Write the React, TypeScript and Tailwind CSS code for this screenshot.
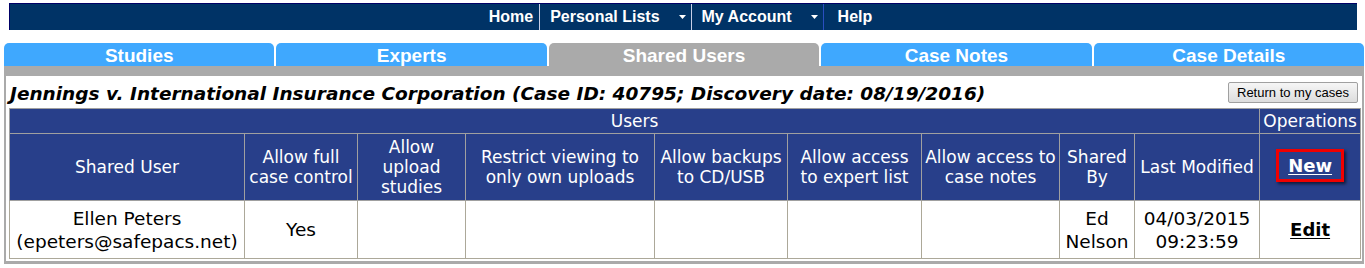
import React from 'react';

const tabs = ['Studies', 'Experts', 'Shared Users', 'Case Notes', 'Case Details'];

const headers = [
  ['Shared User'],
  ['Allow full', 'case control'],
  ['Allow', 'upload', 'studies'],
  ['Restrict viewing to', 'only own uploads'],
  ['Allow backups', 'to CD/USB'],
  ['Allow access', 'to expert list'],
  ['Allow access to', 'case notes'],
  ['Shared', 'By'],
  ['Last Modified'],
];

const widths = [235, 113, 108, 189, 133, 134, 138, 75, 125, 101];

function Caret() {
  return (
    <svg width="7" height="4" viewBox="0 0 7 4" className="ml-[19px] mr-[5px]">
      <path d="M0 0h7L3.5 4z" fill="#fff" />
    </svg>
  );
}

function NavBar() {
  return (
    <div className="ml-[9px] flex h-[27px] w-[1348px] items-stretch justify-center border-l border-t border-[#000066] bg-[#003366] font-['Liberation_Sans',Arial,sans-serif] text-[16px] font-bold text-white">
      <div className="flex items-center pl-[6px] pr-[6px]">Home</div>
      <div className="w-px bg-[#c8d0e8]" />
      <div className="flex items-center pl-[10px]">
        Personal Lists
        <Caret />
      </div>
      <div className="w-px bg-[#c8d0e8]" />
      <div className="flex items-center pl-[10px]">
        My Account
        <Caret />
      </div>
      <div className="w-px bg-[#2a4fc0]" />
      <div className="flex items-center pl-[14px] pr-[12px]">Help</div>
    </div>
  );
}

export default function App() {
  return (
    <div className="h-[268px] w-[1365px] overflow-hidden bg-white pt-[3px]">
      <NavBar />

      <div className="ml-[4px] mt-[13px] flex w-[1360px] gap-[2px]">
        {tabs.map((t) => (
          <div
            key={t}
            className={`flex h-[23px] flex-1 items-center justify-center rounded-t-[5px] pt-[3px] font-['Liberation_Sans',Arial,sans-serif] text-[19px] font-bold text-white ${
              t === 'Shared Users' ? 'bg-[#aaaaaa]' : 'bg-[#3fa8fe]'
            }`}
          >
            {t}
          </div>
        ))}
      </div>
      <div className="ml-[4px] h-[10px] w-[1360px] bg-[#aaaaaa]" />

      <div className="ml-[4px] w-[1360px] border-x-2 border-b-[3px] border-[#aaaaaa] pb-[2px] pl-[3px] pr-[1px]">
        <div className="flex h-[32px] items-center justify-between pt-[4px]">
          <h1 className="pl-[1px] font-['DejaVu_Sans',Verdana,sans-serif] text-[18.5px] font-bold italic leading-[22px] text-black">
            Jennings v. International Insurance Corporation (Case ID: 40795; Discovery date: 08/19/2016)
          </h1>
          <button
            type="button"
            className="mr-[3px] h-[21px] w-[130px] -translate-y-[2px] rounded-[2px] border border-[#a0a0a0] bg-gradient-to-b from-[#f6f6f6] to-[#dddddd] font-['Liberation_Sans',Arial,sans-serif] text-[13px] text-black"
          >
            Return to my cases
          </button>
        </div>

        <table className="w-[1351px] table-fixed border-collapse border border-[#a0a0a0] font-['DejaVu_Sans',Verdana,sans-serif] text-[17px]">
          <colgroup>
            {widths.map((w, i) => (
              <col key={i} style={{ width: w }} />
            ))}
          </colgroup>
          <thead className="bg-[#283f8a] text-white">
            <tr className="h-[25px]">
              <th colSpan={9} className="border border-[#a0a0a0] p-0 font-normal leading-[21px]">
                Users
              </th>
              <th className="border border-[#a0a0a0] p-0 font-normal leading-[21px]">Operations</th>
            </tr>
            <tr className="h-[67px]">
              {headers.map((h, i) => (
                <th key={i} className="border border-[#a0a0a0] p-0 font-normal leading-[20px]">
                  {h.map((line) => (
                    <div key={line} className="whitespace-nowrap">
                      {line}
                    </div>
                  ))}
                </th>
              ))}
              <th className="border border-[#a0a0a0] p-0">
                <div className="flex justify-center pb-[4px]">
                  <span className="flex h-[33px] w-[68px] items-center justify-center border-[3px] border-[#f00000] shadow-[2px_2px_3px_rgba(0,0,0,0.6)]">
                    <a className="text-[18px] font-bold text-white underline underline-offset-2" href="#">
                      New
                    </a>
                  </span>
                </div>
              </th>
            </tr>
          </thead>
          <tbody className="text-[18.5px] text-black">
            <tr className="h-[58px] text-center">
              <td className="border border-[#aca899] p-0 leading-[23px]">
                <div>Ellen Peters</div>
                <div>(epeters@safepacs.net)</div>
              </td>
              <td className="border border-[#aca899] p-0">Yes</td>
              <td className="border border-[#aca899] p-0" />
              <td className="border border-[#aca899] p-0" />
              <td className="border border-[#aca899] p-0" />
              <td className="border border-[#aca899] p-0" />
              <td className="border border-[#aca899] p-0" />
              <td className="border border-[#aca899] p-0 leading-[23px]">
                <div>Ed</div>
                <div>Nelson</div>
              </td>
              <td className="border border-[#aca899] p-0 leading-[23px]">
                <div>04/03/2015</div>
                <div>09:23:59</div>
              </td>
              <td className="border border-[#aca899] p-0">
                <a className="text-[18px] font-bold text-black underline underline-offset-2" href="#">
                  Edit
                </a>
              </td>
            </tr>
          </tbody>
        </table>
      </div>
    </div>
  );
}
